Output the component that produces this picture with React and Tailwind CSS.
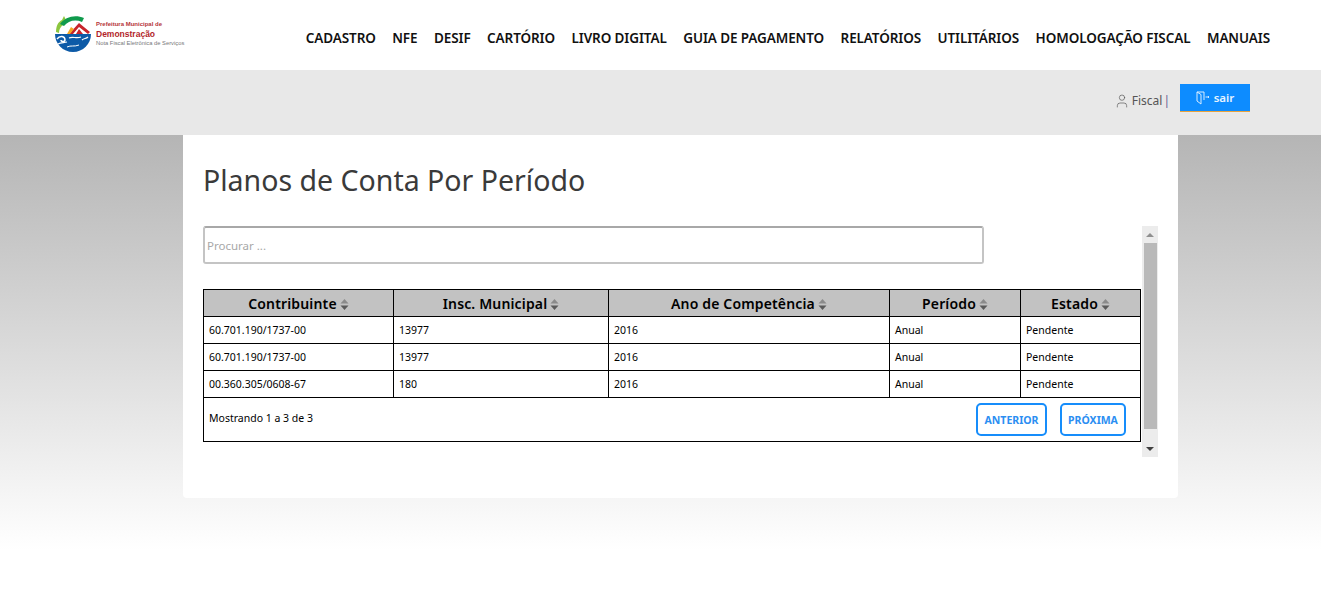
import React from 'react';
import { User } from 'lucide-react';

const navItems = ['CADASTRO', 'NFE', 'DESIF', 'CARTÓRIO', 'LIVRO DIGITAL', 'GUIA DE PAGAMENTO', 'RELATÓRIOS', 'UTILITÁRIOS', 'HOMOLOGAÇÃO FISCAL', 'MANUAIS'];

const rows = [
  ['60.701.190/1737-00', '13977', '2016', 'Anual', 'Pendente'],
  ['60.701.190/1737-00', '13977', '2016', 'Anual', 'Pendente'],
  ['00.360.305/0608-67', '180', '2016', 'Anual', 'Pendente'],
];

const columns = [
  { label: 'Contribuinte', width: 'w-[189px]' },
  { label: 'Insc. Municipal', width: 'w-[215px]' },
  { label: 'Ano de Competência', width: 'w-[281px]' },
  { label: 'Período', width: 'w-[131px]' },
  { label: 'Estado', width: 'w-[120px]' },
];

const Logo = () => (
  <div className="flex items-center gap-[5px] -mt-[3px]">
    <svg width="36" height="37" viewBox="0 0 36 37">
      <path d="M1 17 C1 11 3 7 7 5 L9 1 L11 5 L8 10 C5 12 4 15 4 18 Z" fill="#8cc63f" />
      <path d="M5 9 C10 2 20 -1 29 3 L27 7 C20 4 13 6 9 11 Z" fill="#0f9a4c" />
      <path d="M14 19 L24 8 L35 17 L33 19 L24 12 L18 19 Z" fill="#c8242b" />
      <path d="M12 19 L16 12 L19 14 L15 19 Z" fill="#f6a623" />
      <path d="M21 19 L24 14 L28 19 Z" fill="#c8242b" />
      <path d="M0 19 H36 C36 29 28 37 18 37 C8 37 0 29 0 19 Z" fill="#0d5aa7" />
      <path d="M2 24 C5 20 10 21 10 25 C10 27 6 27 6 25" fill="none" stroke="#fff" strokeWidth="1.4" />
      <path d="M3 29 C6 27 9 28 12 27" fill="none" stroke="#fff" strokeWidth="1.2" />
      <path d="M14 23 C18 21 21 24 26 22 M27 25 C29 23 31 24 33 22" fill="none" stroke="#fff" strokeWidth="1.2" />
      <path d="M12 32 C16 30 19 32 24 30" fill="none" stroke="#fff" strokeWidth="1" />
    </svg>
    <div className="font-['Liberation_Sans',sans-serif] flex flex-col">
      <span className="text-[6px] leading-[9px] font-bold text-[#b5343a] whitespace-nowrap">Prefeitura Municipal de</span>
      <span className="text-[8.5px] leading-[10px] font-bold text-[#b21f2a] whitespace-nowrap">Demonstração</span>
      <span className="text-[5.8px] leading-[9px] text-[#77777a] whitespace-nowrap">Nota Fiscal Eletrônica de Serviços</span>
    </div>
  </div>
);

const SortIcon = () => (
  <svg width="9" height="13" viewBox="0 0 9 13" className="ml-[3px] mt-[2px]">
    <path d="M4.5 1 L8.5 5.5 H0.5 Z" fill="#8a8a8a" />
    <path d="M4.5 12 L8.5 7.5 H0.5 Z" fill="#5a5a5a" />
  </svg>
);

const ExitIcon = () => (
  <svg width="14" height="14" viewBox="0 0 14 14" fill="none" stroke="#d8ecff" strokeWidth="1">
    <path d="M1 1 H8 V9 M1 1 V10 L5 13 V3.5 L1 1" />
    <path d="M9.5 6 H13 M12 5 L13 6 L12 7" />
  </svg>
);

export default function App() {
  return (
    <div className="min-h-[596px] bg-white font-['Noto_Sans',sans-serif] overflow-hidden">
      <header className="h-[70px] bg-white flex items-center justify-between pl-[55px] pr-[51px]">
        <Logo />
        <nav className="flex gap-[16.5px] mt-[7px]">
          {navItems.map((item) => (
            <a key={item} className="text-[13.5px] font-semibold text-[#111] whitespace-nowrap tracking-[-0.1px]">{item}</a>
          ))}
        </nav>
      </header>

      <div className="h-[65px] bg-[#e8e8e8] flex justify-end items-start pr-[71px] pt-[14px]">
        <div className="flex items-center text-[12px] text-[#555] mt-[8px] mr-[10px]">
          <User size={16} strokeWidth={1} className="mr-[2px] text-[#555]" />
          <span>Fiscal</span>
          <span className="ml-[1px] text-[#6b5b95]">|</span>
        </div>
        <button className="w-[70px] h-[28px] bg-[#0d8cff] border-b border-[#e8a33d] text-[#e6f3ff] text-[11.5px] font-semibold flex items-center justify-center gap-[4px]">
          <ExitIcon />
          <span>sair</span>
        </button>
      </div>

      <div className="h-[461px] bg-gradient-to-b from-[#b5b5b5] to-white to-[90%]">
        <main className="w-[995px] h-[363px] ml-[183px] bg-white rounded-b-[4px] pl-[20px] pr-[20px]">
          <h1 className="text-[28.5px] leading-[40px] pt-[25px] h-[91px] text-[#3a3a3a]">Planos de Conta Por Período</h1>

          <div className="flex gap-[1px] items-start">
            <div className="w-[938px] shrink-0">
              <input
                readOnly
                placeholder="Procurar ..."
                className="block w-[781px] h-[38px] border-2 border-[#c4c4c4] border-t-[#a8a8a8] rounded-[3px] px-[2px] text-[11.5px] outline-none placeholder:text-[#a8a8a8]"
              />

              <div className="mt-[25px] border border-black text-[10.5px] text-black">
                <div className="flex h-[27px] bg-[#c2c2c2] border-b border-black">
                  {columns.map((col, i) => (
                    <div key={col.label} className={`${col.width} shrink-0 flex items-center justify-center text-[14px] font-semibold tracking-[0.15px] ${i > 0 ? 'border-l border-black' : ''}`}>
                      {col.label}
                      <SortIcon />
                    </div>
                  ))}
                </div>
                {rows.map((row, r) => (
                  <div key={r} className="flex h-[27px] border-b border-black">
                    {row.map((cell, i) => (
                      <div key={i} className={`${columns[i].width} shrink-0 flex items-center pl-[5px] pt-[1px] ${i > 0 ? 'border-l border-black' : ''}`}>{cell}</div>
                    ))}
                  </div>
                ))}
                <div className="flex h-[43px] justify-between pl-[5px] pr-[14px]">
                  <span className="mt-[11px] leading-[18px]">Mostrando 1 a 3 de 3</span>
                  <div className="flex gap-[13px] mt-[5px]">
                    <button className="w-[71px] h-[33px] pt-[2px] border-2 border-[#168dfb] rounded-[5px] text-[#2b8ef2] text-[10.5px] font-bold">ANTERIOR</button>
                    <button className="w-[66px] h-[33px] pt-[2px] border-2 border-[#168dfb] rounded-[5px] text-[#2b8ef2] text-[10.5px] font-bold">PRÓXIMA</button>
                  </div>
                </div>
              </div>
            </div>

            {/* scrollbar */}
            <div className="w-[16px] h-[231px] bg-[#ececec] flex flex-col items-center justify-between">
              <div className="w-full flex flex-col items-center">
                <div className="h-[17px] flex items-center justify-center">
                  <div className="w-0 h-0 border-x-[4px] border-x-transparent border-b-[4px] border-b-[#8f8f8f]" />
                </div>
                <div className="w-[13px] h-[186px] bg-[#b9b9b9]" />
              </div>
              <div className="h-[17px] flex items-center justify-center">
                <div className="w-0 h-0 border-x-[4px] border-x-transparent border-t-[4px] border-t-[#404040]" />
              </div>
            </div>
          </div>
        </main>
      </div>
    </div>
  );
}
